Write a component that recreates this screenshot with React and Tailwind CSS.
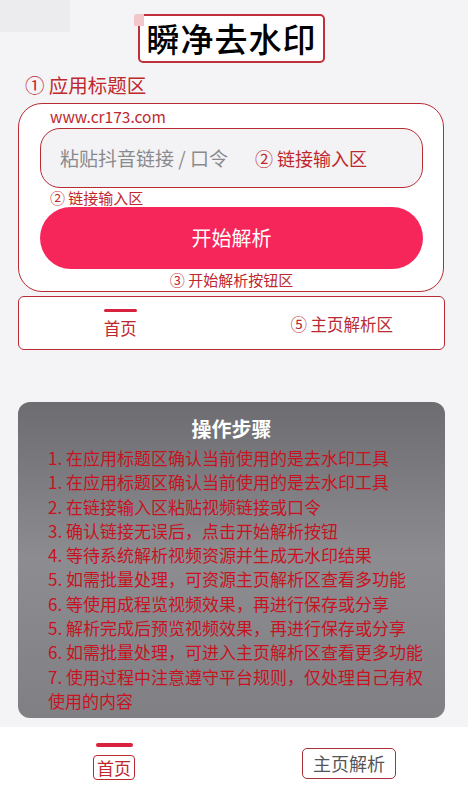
import React from "react";

const steps = [
  "1. 在应用标题区确认当前使用的是去水印工具",
  "1. 在应用标题区确认当前使用的是去水印工具",
  "2. 在链接输入区粘贴视频链接或口令",
  "3. 确认链接无误后，点击开始解析按钮",
  "4. 等待系统解析视频资源并生成无水印结果",
  "5. 如需批量处理，可资源主页解析区查看多功能",
  "6. 等使用成程览视频效果，再进行保存或分享",
  "5. 解析完成后预览视频效果，再进行保存或分享",
  "6. 如需批量处理，可进入主页解析区查看更多功能",
  "7. 使用过程中注意遵守平台规则，仅处理自己有权使用的内容",
];

const App = () => {
  return (
    <div
      className="w-[468px] h-[797px] bg-[#f4f4f6] flex flex-col overflow-hidden"
      style={{ fontFamily: '"Noto Sans CJK SC", "Noto Sans", sans-serif' }}
    >
      {/* TITLE */}
      <div className="relative h-[14px]">
        <div className="absolute left-0 top-0 w-[70px] h-[32px] bg-[#ececee]" />
      </div>
      <div className="flex justify-center">
        <div className="relative ml-[-5px] w-[187px] h-[49px] border-2 border-[#c0303a] rounded-[5px] flex items-center justify-center bg-white">
          <div className="absolute -left-[6px] -top-[2px] w-[10px] h-[12px] bg-[#f3c6cc] rounded-tl-[3px]" />
          <span className="text-[33px] leading-none text-black font-medium tracking-[1px]">
            瞬净去水印
          </span>
        </div>
      </div>

      <div className="pl-[25px] mt-[9px] text-[19.5px] leading-[26px] text-[#c0282f]">
        ① 应用标题区
      </div>

      {/* MAIN CARD */}
      <div className="ml-[18px] mr-[24px] mt-[5px] bg-white border border-[#b92b33] rounded-[24px] pl-[21px] pr-[20px] pb-[2px]">
        <div className="pl-[10px] pt-[3px] text-[15.5px] leading-[18px] text-[#c0282f]">
          www.cr173.com
        </div>
        <div className="mt-[3px] h-[60px] rounded-[20px] border border-[#b92b33] bg-[#f3f3f5] flex items-center pl-[19px]">
          <span className="text-[19px] text-[#8a8a8e]">粘贴抖音链接 / 口令</span>
          <span className="ml-[27px] text-[18px] text-[#c0282f]">② 链接输入区</span>
        </div>
        <div className="pl-[10px] mt-[1px] text-[15px] leading-[18px] text-[#c0282f]">
          ② 链接输入区
        </div>
        <button className="w-full h-[62px] rounded-full bg-[#f7265a] text-white text-[20px] flex items-center justify-center">
          开始解析
        </button>
        <div className="text-center mt-[2px] text-[15px] leading-[18px] text-[#c0282f]">
          ③ 开始解析按钮区
        </div>
      </div>

      {/* TABS */}
      <div className="ml-[18px] mr-[23px] mt-[4px] h-[54px] bg-white border border-[#b92b33] rounded-[6px] flex">
        <div className="w-1/2 flex flex-col items-center pt-[12px] pr-[10px]">
          <div className="w-[33px] h-[3px] rounded-full bg-[#d8223e]" />
          <span className="mt-[5px] text-[16.5px] leading-[22px] text-[#c0282f]">首页</span>
        </div>
        <div className="w-1/2 flex items-center justify-center pl-[8px] pt-[2px]">
          <span className="text-[16.5px] text-[#b92b33]">⑤ 主页解析区</span>
        </div>
      </div>

      {/* STEPS */}
      <div className="ml-[18px] mr-[23px] mt-[52px] h-[316px] rounded-[12px] bg-gradient-to-b from-[#6d6d71] via-[#8d8d91] to-[#808084] pl-[30px] pr-[14px] pt-[13px]">
        <div className="text-center pr-[16px] text-[20px] leading-[27px] font-bold text-white">
          操作步骤
        </div>
        <div className="mt-[4px] text-[17px] leading-[24.3px] text-[#c8121f]">
          {steps.map((s, i) => (
            <div key={i}>{s}</div>
          ))}
        </div>
      </div>

      {/* BOTTOM NAV */}
      <div className="mt-auto h-[70px] bg-white flex">
        <div className="w-1/2 flex flex-col items-center pt-[16px] pr-[6px]">
          <div className="w-[37px] h-[4px] rounded-full bg-[#d8223e]" />
          <span className="mt-[8px] px-[3px] border border-[#b92b33] rounded-[4px] text-[17px] leading-[23px] text-[#c0282f]">
            首页
          </span>
        </div>
        <div className="w-1/2 flex items-center justify-center pt-[2px] pr-[4px]">
          <span className="px-[10px] border border-[#a83038] rounded-[5px] text-[18px] leading-[29px] text-[#555558]">
            主页解析
          </span>
        </div>
      </div>
    </div>
  );
};

export default App;
